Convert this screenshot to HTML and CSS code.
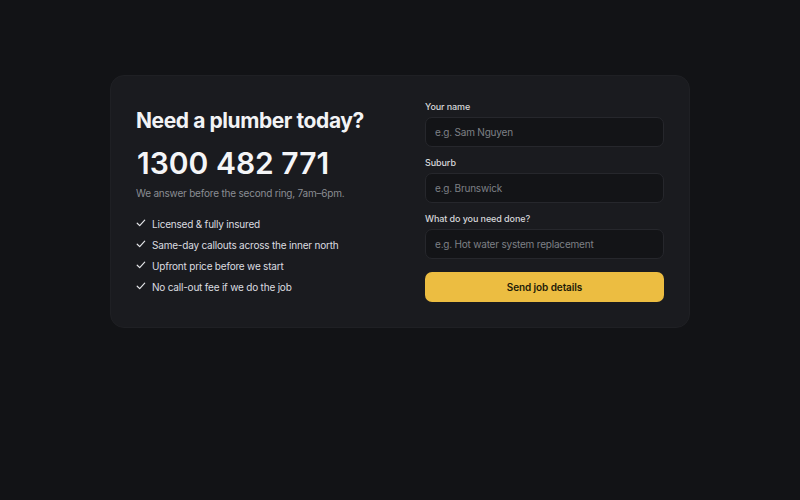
FILE: index.html
```html
<!DOCTYPE html>
<html lang="en">
<head>
<meta charset="utf-8">
<title>Need a plumber today?</title>
<link rel="stylesheet" href="styles.css">
</head>
<body>
<main class="page">
  <section class="card">
    <div class="pitch">
      <h1 class="pitch-title">Need a plumber today?</h1>
      <p class="pitch-phone">1300 482 771</p>
      <p class="pitch-note">We answer before the second ring, 7am–6pm.</p>
      <ul class="perks">
        <li class="perk"><svg class="tick" viewBox="0 0 10 10"><path d="M1.2 5.2l2.5 2.4 5-5.4"/></svg>Licensed &amp; fully insured</li>
        <li class="perk"><svg class="tick" viewBox="0 0 10 10"><path d="M1.2 5.2l2.5 2.4 5-5.4"/></svg>Same-day callouts across the inner north</li>
        <li class="perk"><svg class="tick" viewBox="0 0 10 10"><path d="M1.2 5.2l2.5 2.4 5-5.4"/></svg>Upfront price before we start</li>
        <li class="perk"><svg class="tick" viewBox="0 0 10 10"><path d="M1.2 5.2l2.5 2.4 5-5.4"/></svg>No call-out fee if we do the job</li>
      </ul>
    </div>
    <form class="job-form">
      <label class="field">
        <span class="field-label">Your name</span>
        <input class="field-input" type="text" placeholder="e.g. Sam Nguyen">
      </label>
      <label class="field">
        <span class="field-label">Suburb</span>
        <input class="field-input" type="text" placeholder="e.g. Brunswick">
      </label>
      <label class="field">
        <span class="field-label">What do you need done?</span>
        <input class="field-input" type="text" placeholder="e.g. Hot water system replacement">
      </label>
      <button class="submit" type="button">Send job details</button>
    </form>
  </section>
</main>
</body>
</html>
```

FILE: styles.css
```css
* {
  box-sizing: border-box;
}

html,
body {
  margin: 0;
  background: #121316;
}

body {
  font-family: Inter, "Noto Sans", sans-serif;
  color: #e8e9ec;
  -webkit-font-smoothing: antialiased;
}

.page {
  padding-top: 75px;
  display: flex;
  justify-content: center;
}

.card {
  width: 580px;
  padding: 25px;
  background: #1a1b1f;
  border: 1px solid #1f2024;
  border-radius: 14px;
  display: grid;
  grid-template-columns: 241px 239px;
  column-gap: 48px;
  align-items: center;
}

/* left column: headline, phone and perks */
.pitch-title {
  margin: 0;
  font-size: 21px;
  line-height: 26px;
  font-weight: 700;
  letter-spacing: -0.02em;
  color: #f2f3f5;
  white-space: nowrap;
}

.pitch-phone {
  margin: 11px 0 0;
  padding-left: 1px;
  font-size: 30px;
  line-height: 36px;
  font-weight: 600;
  color: #f4f5f7;
}

.pitch-note {
  margin: 4px 0 0;
  font-size: 10px;
  line-height: 16px;
  letter-spacing: -0.02em;
  color: #8a8d93;
  white-space: nowrap;
}

.perks {
  list-style: none;
  margin: 15px 0 0;
  padding: 0;
  display: flex;
  flex-direction: column;
  gap: 5px;
}

.perk {
  display: flex;
  align-items: center;
  gap: 6px;
  font-size: 10px;
  line-height: 16px;
  letter-spacing: -0.02em;
  color: #dcdde0;
  white-space: nowrap;
}

.tick {
  width: 10px;
  height: 10px;
  flex: none;
  margin-top: -2px;
  fill: none;
  stroke: #e4e5e8;
  stroke-width: 1.2;
  stroke-linecap: round;
  stroke-linejoin: round;
}

/* right column: job form */
.job-form {
  display: flex;
  flex-direction: column;
  gap: 10px;
}

.field {
  display: flex;
  flex-direction: column;
  gap: 4px;
}

.field-label {
  font-size: 9px;
  line-height: 12px;
  font-weight: 500;
  letter-spacing: -0.01em;
  color: #d6d7da;
}

.field-input {
  height: 30px;
  padding: 0 9px;
  background: #131417;
  border: 1px solid #26272c;
  border-radius: 7px;
  font-family: inherit;
  font-size: 10px;
  letter-spacing: -0.02em;
  color: #e8e9ec;
  outline: none;
}

.field-input::placeholder {
  color: #7e8086;
}

.submit {
  margin-top: 3px;
  height: 30px;
  border: 0;
  border-radius: 7px;
  background: #ecbd41;
  color: #221b08;
  font-family: inherit;
  font-size: 10px;
  font-weight: 600;
  letter-spacing: -0.01em;
}
```
